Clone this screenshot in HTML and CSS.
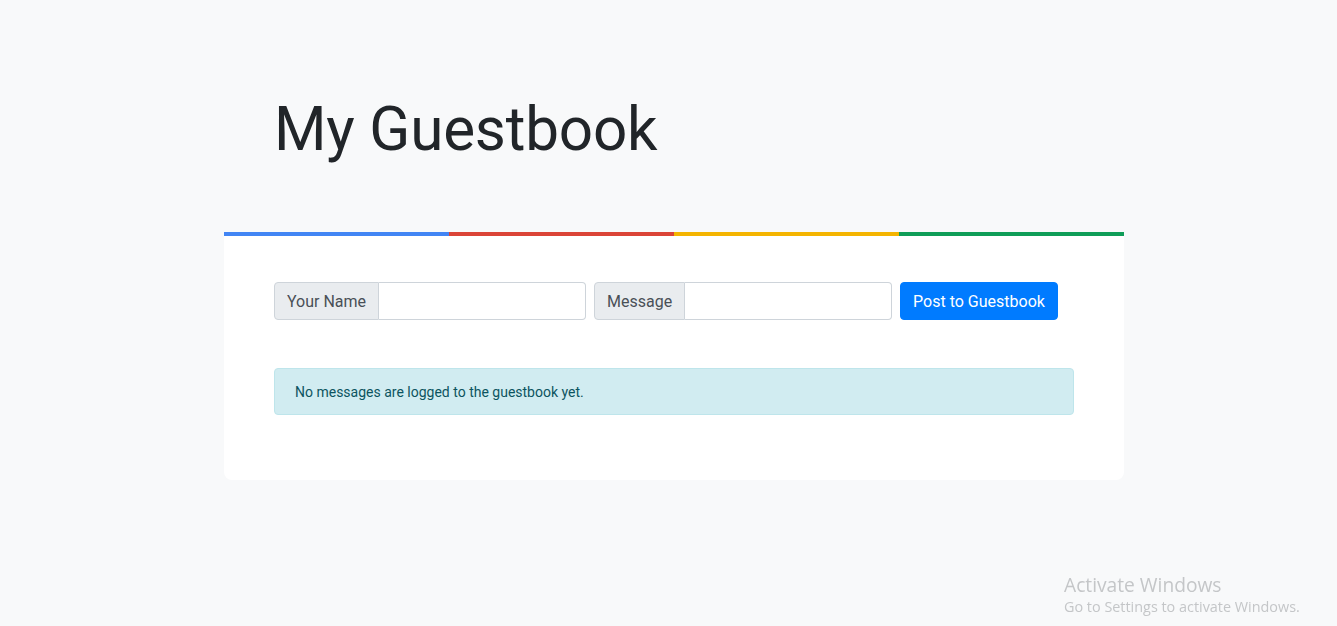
FILE: index.html
```html
<!DOCTYPE html>
<html lang="en">
<head>
<meta charset="utf-8">
<title>My Guestbook</title>
<link rel="stylesheet" href="styles.css">
</head>
<body>
<main class="page">
  <header class="hero">
    <h1 class="title">My Guestbook</h1>
  </header>
  <section class="card">
    <div class="stripe">
      <span class="s-blue"></span><span class="s-red"></span><span class="s-yellow"></span><span class="s-green"></span>
    </div>
    <div class="card-body">
      <form class="form-row">
        <div class="input-group">
          <span class="addon addon-name">Your Name</span>
          <input class="field" type="text">
        </div>
        <div class="input-group">
          <span class="addon addon-msg">Message</span>
          <input class="field" type="text">
        </div>
        <button class="btn" type="button">Post to Guestbook</button>
      </form>
      <div class="alert">No messages are logged to the guestbook yet.</div>
    </div>
  </section>
</main>
<div class="watermark">
  <div class="wm-title">Activate Windows</div>
  <div class="wm-sub">Go to Settings to activate Windows.</div>
</div>
</body>
</html>
```

FILE: styles.css
```css
* { box-sizing: border-box; }
html, body { margin: 0; padding: 0; }
body {
  background: #f8f9fa;
  font-family: Roboto, "Liberation Sans", Arial, sans-serif;
  color: #212529;
  height: 626px;
  overflow: hidden;
  padding-left: 11px;
}
.page {
  width: 900px;
  margin: 0 auto;
}
.hero {
  padding: 92px 50px 0;
  height: 232px;
}
.title {
  margin: 0;
  font-size: 60.2px;
  font-weight: 400;
  line-height: 76px;
  letter-spacing: -0.2px;
  color: #212529;
}
.card {
  background: #fff;
  border-radius: 0 0 8px 8px;
  height: 248px;
}
.stripe {
  display: flex;
  height: 4px;
}
.stripe span { flex: 1; }
.s-blue { background: #4285f4; }
.s-red { background: #db4437; }
.s-yellow { background: #f4b400; }
.s-green { background: #0f9d58; }
.card-body {
  padding: 46px 50px 0;
}
.form-row {
  display: flex;
  gap: 8px;
  margin: 0;
}
.input-group {
  display: flex;
  height: 38px;
}
.addon {
  display: flex;
  align-items: center;
  padding: 0 12px;
  background: #e9ecef;
  border: 1px solid #ced4da;
  border-radius: 4px 0 0 4px;
  color: #495057;
  font-size: 16px;
  white-space: nowrap;
}
.addon-name { width: 105px; }
.addon-msg { width: 91px; }
.field {
  width: 207px;
  height: 38px;
  border: 1px solid #ced4da;
  border-left: 0;
  border-radius: 0 4px 4px 0;
  background: #fff;
  font: inherit;
  padding: 0 12px;
  margin: 0;
}
.btn {
  height: 38px;
  width: 158px;
  background: #007bff;
  color: #fff;
  border: 1px solid #007bff;
  border-radius: 4px;
  font-family: inherit;
  font-size: 16px;
  padding: 0;
  cursor: pointer;
}
.alert {
  margin-top: 48px;
  width: 800px;
  height: 47px;
  display: flex;
  align-items: center;
  padding: 0 20px;
  background: #d1ecf1;
  border: 1px solid #bee5eb;
  border-radius: 4px;
  color: #0c5460;
  font-size: 14px;
}
.watermark {
  position: fixed;
  left: 1064px;
  top: 573px;
  color: #c4c6c8;
  font-family: "Open Sans", "Noto Sans", sans-serif;
  pointer-events: none;
}
.wm-title { font-size: 19.2px; line-height: 24px; }
.wm-sub { font-size: 14.4px; line-height: 20px; letter-spacing: 0; }
```
